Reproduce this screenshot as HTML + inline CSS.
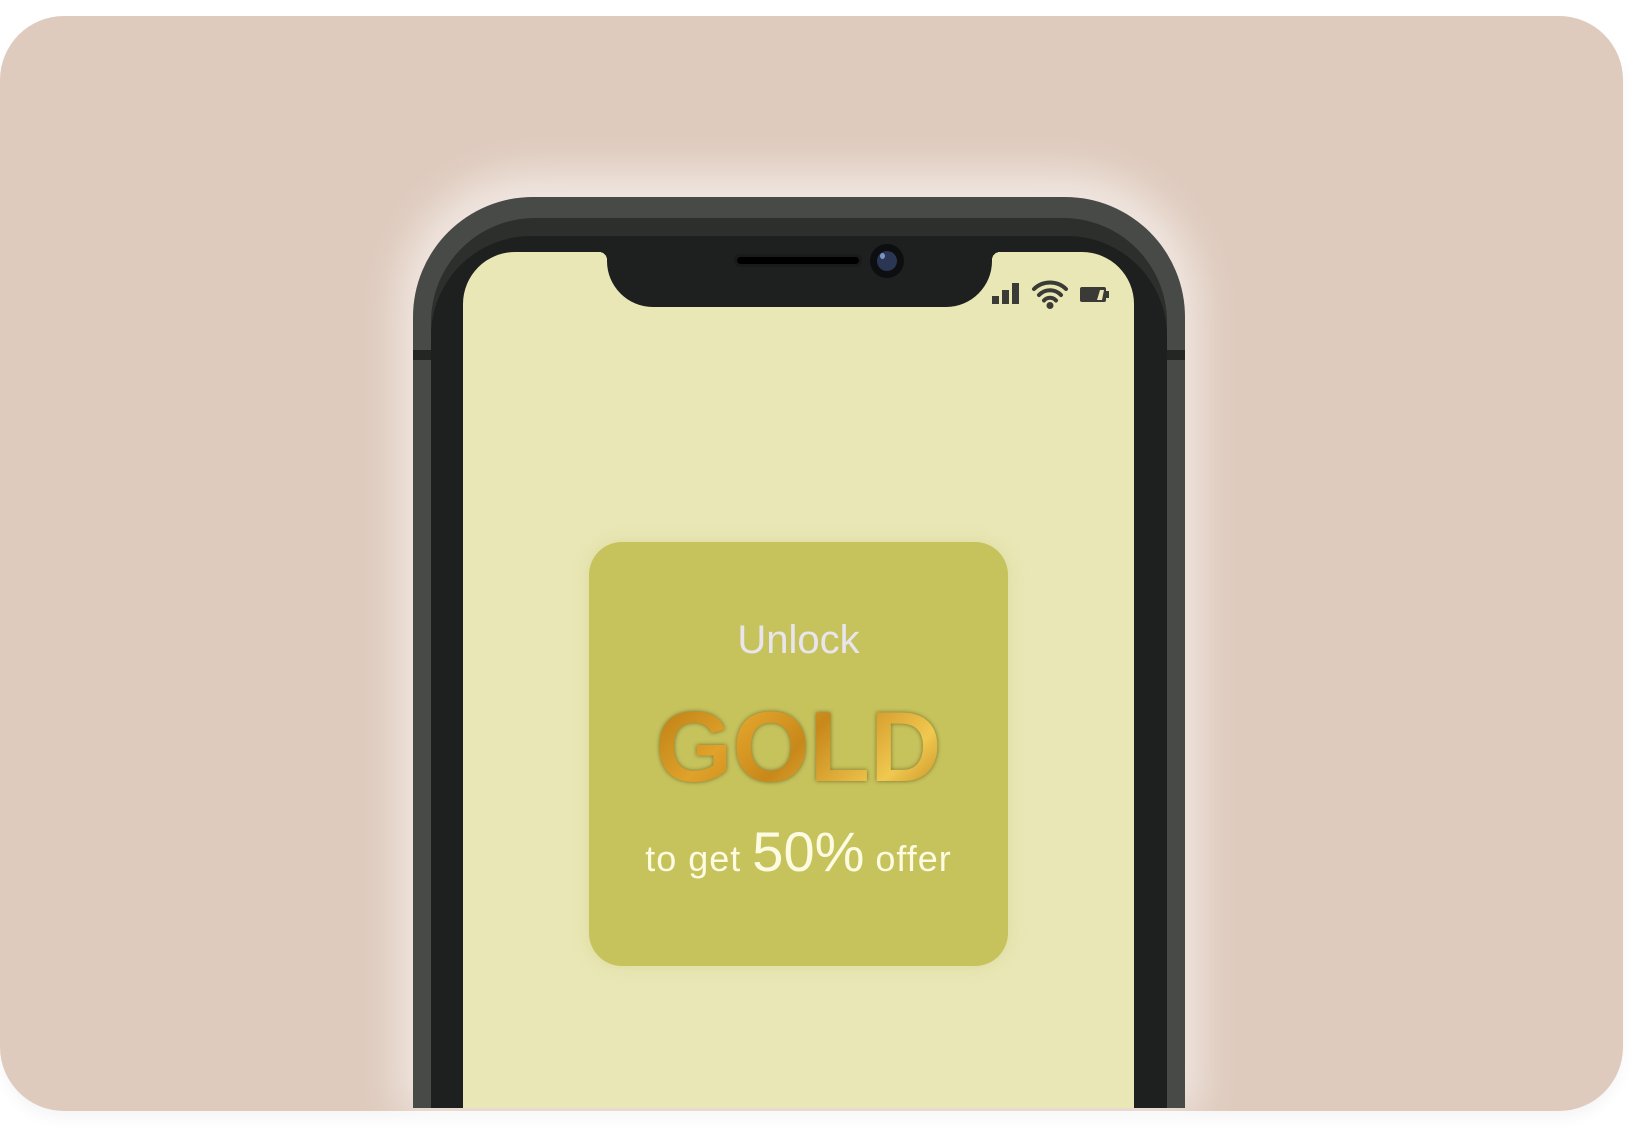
<!DOCTYPE html>
<html><head><style>
html,body{margin:0;padding:0;width:1647px;height:1128px;background:#fff;overflow:hidden;font-family:"Liberation Sans",sans-serif}
.card{position:absolute;left:0;top:16px;width:1623px;height:1095px;background:#dfcbbe;border-radius:64px;box-shadow:0 8px 14px rgba(0,0,0,.04);overflow:hidden}
.phone{position:absolute;left:413px;top:197px;width:772px;height:911px;background:#484a48;border-radius:120px 120px 0 0;box-shadow:0 -10px 40px 14px rgba(255,255,255,.55)}
.l2{position:absolute;left:18px;right:18px;top:21px;bottom:0;background:#2d2f2c;border-radius:104px 104px 0 0}
.l3{position:absolute;left:18px;right:18px;top:39px;bottom:0;background:#1e201f;border-radius:100px 100px 0 0}
.band{position:absolute;top:153px;height:10px;width:18px;background:#242624}
.screen{position:absolute;left:463px;top:252px;width:671px;height:856px;background:#e9e7b5;border-radius:52px 52px 0 0}
.notch{position:absolute;left:607px;top:240px;width:385px;height:67px;background:#1e201f;border-radius:0 0 46px 46px}
.speaker{position:absolute;left:737px;top:257px;width:122px;height:7px;background:#000;border-radius:4px;box-shadow:0 0 0 3px #191a19}
.cam{position:absolute;left:870px;top:244px;width:34px;height:34px;border-radius:50%;background:#0d0e10}
.cam i{position:absolute;left:7px;top:7px;width:20px;height:20px;border-radius:50%;background:#2b3654}
.cam b{position:absolute;left:10px;top:9px;width:5px;height:6px;border-radius:50%;background:#7c93c4}
.box{position:absolute;left:589px;top:542px;width:419px;height:424px;background:#c6c35c;border-radius:33px;box-shadow:0 0 16px rgba(200,195,120,.35);text-align:center}
.unlock{position:absolute;left:0;right:0;top:620px;font-size:40px;color:#e9e5ee;text-align:center;line-height:1}
.gold{position:absolute;left:0;right:0;top:697px;text-align:center;font-size:99px;font-weight:bold;line-height:1;letter-spacing:0px}
.gold span{background:linear-gradient(135deg,#b77a10 0%,#e0a22a 30%,#c8881a 50%,#f0c850 80%,#c08418 100%);-webkit-background-clip:text;background-clip:text;color:transparent;filter:drop-shadow(0 0 2px rgba(80,70,20,.7))}
.offer{position:absolute;left:0;right:0;top:818px;text-align:center;color:#fdfbe2;font-size:36px;line-height:1.2;white-space:nowrap;letter-spacing:1px}
.offer b{font-weight:normal;font-size:56px;letter-spacing:0}
</style></head><body>
<div class="card"></div>
<div class="phone"><div class="l2"></div><div class="l3"></div>
<div class="band" style="left:0"></div><div class="band" style="right:0"></div></div>
<div class="screen"></div>
<div class="notch"></div>
<div style="position:absolute;left:599px;top:252px;width:8px;height:8px;background:radial-gradient(circle at 0 100%,transparent 8px,#1e201f 8px)"></div>
<div style="position:absolute;left:992px;top:252px;width:8px;height:8px;background:radial-gradient(circle at 100% 100%,transparent 8px,#1e201f 8px)"></div>
<div class="speaker"></div>
<div class="cam"><i></i><b></b></div>
<svg style="position:absolute;left:990px;top:280px" width="125" height="30" viewBox="0 0 125 30">
<g fill="#3a3a36">
<rect x="2" y="16" width="7" height="8"/><rect x="12" y="10" width="7" height="14"/><rect x="22" y="3" width="7" height="21"/>
<rect x="90" y="7" width="26" height="15" rx="2"/><rect x="116" y="11" width="3" height="7"/>
<circle cx="60" cy="25.5" r="3.5"/>
</g>
<polygon points="110,10 114,10 112,20 107,20" fill="#e9e7b5"/>
<g fill="none" stroke="#3a3a36" stroke-width="4" stroke-linecap="round">
<path d="M44 9 A23 23 0 0 1 76 9"/><path d="M49 15 A15 15 0 0 1 71 15"/><path d="M54 20.5 A8 8 0 0 1 66 20.5"/>
</g></svg>
<div class="box"></div>
<div style="position:absolute;left:589px;width:419px;top:0">
<div class="unlock">Unlock</div>
<div class="gold"><span>GOLD</span></div>
<div class="offer">to get <b>50%</b> offer</div>
</div>
</body></html>
